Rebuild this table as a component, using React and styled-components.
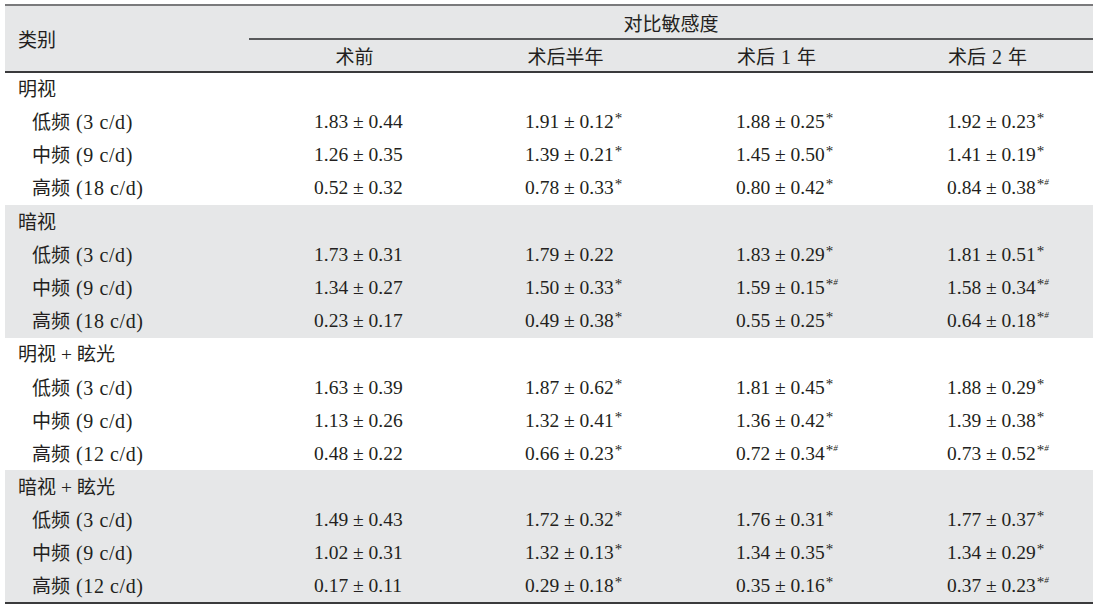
import React from "react";
import styled, { createGlobalStyle } from "styled-components";

const Global = createGlobalStyle`
  html, body { margin: 0; padding: 0; background: #ffffff; }
  body { width: 1095px; height: 607px; overflow: hidden; }
`;

const Page = styled.div`
  padding: 4px 2px 0 5px;
`;

const Table = styled.table`
  width: 1088px;
  border-collapse: collapse;
  table-layout: fixed;
  color: #231f20;
  font-family: "Liberation Serif", "Noto Sans CJK SC", serif;
  font-size: 19.5px;
  border-top: 2px solid #7a7a7c;
  border-bottom: 2px solid #3a3a3c;
`;

const Head = styled.thead`
  background: #e6e7e8;
`;

const HeadCell = styled.th`
  height: ${(p) => p.$h || 32}px;
  padding: 0;
  text-align: ${(p) => (p.$left ? "left" : "center")};
  padding-left: ${(p) => (p.$left ? 13 : 0)}px;
  font-family: "Noto Sans CJK SC", sans-serif;
  font-weight: 400;
  font-size: 19px;
  border-bottom: ${(p) => (p.$line ? "2px solid #58595b" : "none")};
`;

const Num = styled.span`
  font-family: "Liberation Serif", serif;
  font-size: 20px;
  margin: 0 6px;
`;

const HeadLastRow = styled.tr`
  border-bottom: 2px solid #3a3a3c;
`;

const Group = styled.tbody`
  background: ${(p) => (p.$shade ? "#e6e7e8" : "#ffffff")};
`;

const Row = styled.tr`
  height: 33.2px;
`;

const Label = styled.td`
  padding: 0 0 0 ${(p) => (p.$sub ? 27 : 13)}px;
  white-space: nowrap;
  line-height: 1;
`;

const Cjk = styled.span`
  font-family: "Noto Sans CJK SC", sans-serif;
  font-weight: 400;
  font-size: 19px;
`;

const Unit = styled.span`
  font-family: "Liberation Serif", serif;
  font-size: 20px;
  letter-spacing: 0.6px;
  margin-left: 6px;
`;

const Plus = styled.span`
  font-family: "Liberation Serif", serif;
  margin: 0 5px;
`;

const Value = styled.td`
  padding: 0 0 0 65px;
  white-space: nowrap;
  line-height: 1;
`;

const Sup = styled.sup`
  font-size: 15px;
  vertical-align: 5px;
  line-height: 0;
  margin-left: 1px;
`;

const Hash = styled.span`
  font-size: 9px;
  vertical-align: 4px;
  font-style: italic;
`;

const cols = ["术前", "术后半年", "术后 1 年", "术后 2 年"];

const groups = [
  {
    title: ["明视"],
    shade: false,
    rows: [
      ["低频", "3 c/d", ["1.83 ± 0.44", ""], ["1.91 ± 0.12", "*"], ["1.88 ± 0.25", "*"], ["1.92 ± 0.23", "*"]],
      ["中频", "9 c/d", ["1.26 ± 0.35", ""], ["1.39 ± 0.21", "*"], ["1.45 ± 0.50", "*"], ["1.41 ± 0.19", "*"]],
      ["高频", "18 c/d", ["0.52 ± 0.32", ""], ["0.78 ± 0.33", "*"], ["0.80 ± 0.42", "*"], ["0.84 ± 0.38", "*#"]],
    ],
  },
  {
    title: ["暗视"],
    shade: true,
    rows: [
      ["低频", "3 c/d", ["1.73 ± 0.31", ""], ["1.79 ± 0.22", ""], ["1.83 ± 0.29", "*"], ["1.81 ± 0.51", "*"]],
      ["中频", "9 c/d", ["1.34 ± 0.27", ""], ["1.50 ± 0.33", "*"], ["1.59 ± 0.15", "*#"], ["1.58 ± 0.34", "*#"]],
      ["高频", "18 c/d", ["0.23 ± 0.17", ""], ["0.49 ± 0.38", "*"], ["0.55 ± 0.25", "*"], ["0.64 ± 0.18", "*#"]],
    ],
  },
  {
    title: ["明视", "眩光"],
    shade: false,
    rows: [
      ["低频", "3 c/d", ["1.63 ± 0.39", ""], ["1.87 ± 0.62", "*"], ["1.81 ± 0.45", "*"], ["1.88 ± 0.29", "*"]],
      ["中频", "9 c/d", ["1.13 ± 0.26", ""], ["1.32 ± 0.41", "*"], ["1.36 ± 0.42", "*"], ["1.39 ± 0.38", "*"]],
      ["高频", "12 c/d", ["0.48 ± 0.22", ""], ["0.66 ± 0.23", "*"], ["0.72 ± 0.34", "*#"], ["0.73 ± 0.52", "*#"]],
    ],
  },
  {
    title: ["暗视", "眩光"],
    shade: true,
    rows: [
      ["低频", "3 c/d", ["1.49 ± 0.43", ""], ["1.72 ± 0.32", "*"], ["1.76 ± 0.31", "*"], ["1.77 ± 0.37", "*"]],
      ["中频", "9 c/d", ["1.02 ± 0.31", ""], ["1.32 ± 0.13", "*"], ["1.34 ± 0.35", "*"], ["1.34 ± 0.29", "*"]],
      ["高频", "12 c/d", ["0.17 ± 0.11", ""], ["0.29 ± 0.18", "*"], ["0.35 ± 0.16", "*"], ["0.37 ± 0.23", "*#"]],
    ],
  },
];

function Mark({ m }) {
  if (!m) return null;
  return (
    <Sup>
      *{m.includes("#") && <Hash>#</Hash>}
    </Sup>
  );
}

function HeaderText({ text }) {
  const parts = text.split(" ").filter(Boolean);
  return parts.map((p, i) => (/\d/.test(p) ? <Num key={i}>{p}</Num> : <React.Fragment key={i}>{p}</React.Fragment>));
}

export default function App() {
  return (
    <>
      <Global />
      <Page>
        <Table>
          <colgroup>
            <col style={{ width: 244 }} />
            <col style={{ width: 211 }} />
            <col style={{ width: 211 }} />
            <col style={{ width: 211 }} />
            <col style={{ width: 211 }} />
          </colgroup>
          <Head>
            <tr>
              <HeadCell $left rowSpan={2}>类别</HeadCell>
              <HeadCell colSpan={4} $line $h={32}>对比敏感度</HeadCell>
            </tr>
            <HeadLastRow>
              {cols.map((c) => (
                <HeadCell key={c} $h={31}>
                  <HeaderText text={c} />
                </HeadCell>
              ))}
            </HeadLastRow>
          </Head>
          {groups.map((g, gi) => (
            <Group key={gi} $shade={g.shade}>
              <Row>
                <Label>
                  <Cjk>{g.title[0]}</Cjk>
                  {g.title[1] && (
                    <>
                      <Plus>+</Plus>
                      <Cjk>{g.title[1]}</Cjk>
                    </>
                  )}
                </Label>
                <Value />
                <Value />
                <Value />
                <Value />
              </Row>
              {g.rows.map((r, ri) => (
                <Row key={ri}>
                  <Label $sub>
                    <Cjk>{r[0]}</Cjk>
                    <Unit>({r[1]})</Unit>
                  </Label>
                  {r.slice(2).map((v, vi) => (
                    <Value key={vi}>
                      {v[0]}
                      <Mark m={v[1]} />
                    </Value>
                  ))}
                </Row>
              ))}
            </Group>
          ))}
        </Table>
      </Page>
    </>
  );
}
